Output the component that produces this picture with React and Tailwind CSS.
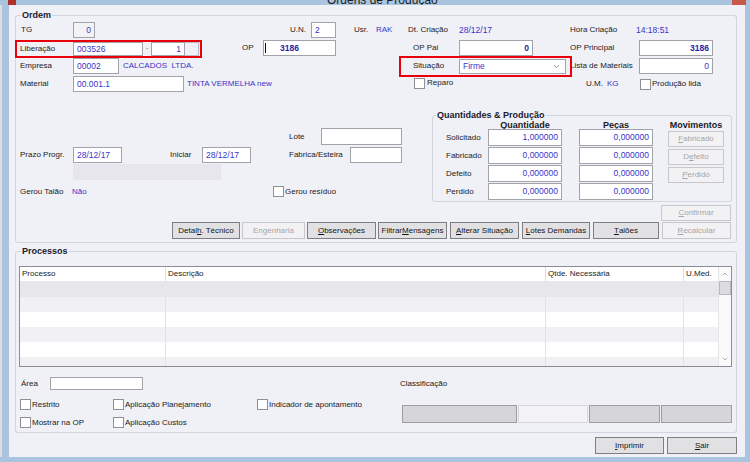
import { ChevronDown, ChevronUp } from 'lucide-react';

function Box({ className = '', gray = false, children }) {
  return (
    <div
      className={`flex shrink-0 items-center overflow-hidden whitespace-nowrap border border-[#a2a2aa] px-[3px] text-[8.5px] text-[#3a35c6] ${gray ? 'bg-[#f3f3f5]' : 'bg-white'} ${className}`}
    >
      {children}
    </div>
  );
}

function Lbl({ className = '', children }) {
  return <span className={`flex shrink-0 items-center whitespace-nowrap ${className}`}>{children}</span>;
}

function Check() {
  return <span className="h-[11px] w-[11px] shrink-0 border border-[#8f8f94] bg-white" />;
}

function Btn({ className = '', disabled = false, children }) {
  return (
    <button
      type="button"
      className={`flex shrink-0 items-center justify-center whitespace-nowrap border text-[8px] ${disabled ? 'border-[#c8c8cc] bg-[#f2f2f4] text-[#a6a6a6]' : 'border-[#7e7e84] bg-[#e1e1e3] text-[#151515]'} ${className}`}
    >
      {children}
    </button>
  );
}

function U({ children }) {
  return <span className="underline underline-offset-1">{children}</span>;
}

function Group({ title, titleClass = 'left-[5px]', className = '', children }) {
  return (
    <div className={`relative shrink-0 rounded-[3px] border border-[#d2d5de] ${className}`}>
      <span className={`absolute -top-[5px] bg-[#f0f0f7] px-[1px] text-[9px] font-bold leading-[9px] text-[#1a1a2e] ${titleClass}`}>
        {title}
      </span>
      {children}
    </div>
  );
}

const cols = ['w-[146px]', 'w-[380px]', 'w-[138px]', 'w-[34px]'];
const heads = ['Processo', 'Descrição', 'Qtde. Necessária', 'U.Med.'];
const qtyRows = [
  ['Solicitado', '1,000000', '0,000000'],
  ['Fabricado', '0,000000', '0,000000'],
  ['Defeito', '0,000000', '0,000000'],
  ['Perdido', '0,000000', '0,000000'],
];

export default function App() {
  return (
    <div className="flex h-[462px] w-[750px] flex-col overflow-hidden bg-[#aac4e0] font-['Liberation_Sans',Arial,sans-serif] text-[8px] text-[#1b1b1b]">
      {/* Title bar */}
      <div className="flex h-[5px] shrink-0 overflow-hidden bg-[#aac4e0]">
        <span className="ml-[8px] h-[5px] w-[8px] shrink-0 bg-[#b0302a]" />
        <span className="-mt-[7px] ml-[311px] shrink-0 whitespace-nowrap text-[12px] leading-[14px] text-[#1c1c1c]">
          Ordens de Produção
        </span>
        <span className="ml-auto mr-[4px] h-[5px] w-[14px] shrink-0 bg-[#c95a4b]" />
      </div>

      <div className="flex h-[452px] shrink-0">
        <div className="w-[2px] shrink-0 bg-[#dadde2]" />
        <div className="w-[7px] shrink-0 bg-[#aac4e0]" />

        {/* Client area */}
        <div className="flex w-[736px] shrink-0 flex-col bg-[#f0f0f7]">
          {/* Ordem */}
          <Group title="Ordem" className="ml-[6px] mt-[10px] flex h-[228px] w-[722px] flex-col">
            <div className="mt-[6px] flex h-[16px] items-center">
              <Lbl className="ml-[5px] w-[52px]">TG</Lbl>
              <Box gray className="h-[16px] w-[22px] justify-end">0</Box>
              <Lbl className="w-[211px] justify-end">U.N.</Lbl>
              <Box className="ml-[5px] h-[16px] w-[25px]">2</Box>
              <Lbl className="ml-[18px] w-[22px]">Usr.</Lbl>
              <Lbl className="w-[32px] text-[#3a35c6]">RAK</Lbl>
              <Lbl className="w-[51px]">Dt. Criação</Lbl>
              <Lbl className="w-[111px] text-[8.5px] text-[#3a35c6]">28/12/17</Lbl>
              <Lbl className="w-[66px]">Hora Criação</Lbl>
              <Lbl className="text-[8.5px] text-[#3a35c6]">14:18:51</Lbl>
            </div>

            <div className="mt-[2px] flex h-[18px] items-start">
              <div className="-ml-[1px] flex h-[18px] w-[187px] shrink-0 items-center border-2 border-[#e8000b]">
                <Lbl className="ml-[3px] w-[53px]">Liberação</Lbl>
                <Box className="h-[14px] w-[70px]">003526</Box>
                <Lbl className="w-[8px] justify-center">·</Lbl>
                <Box className="h-[14px] w-[34px] justify-end">1</Box>
                <span className="h-[14px] w-[14px] shrink-0 border border-l-0 border-[#bcbcc4]" />
              </div>
              <Lbl className="ml-[40px] h-[16px] w-[21px]">OP</Lbl>
              <div className="flex h-[16px] w-[73px] shrink-0 items-center border border-[#a2a2aa] bg-white px-[1px]">
                <span className="h-[10px] w-px bg-black" />
                <span className="ml-[14px] text-[8.5px] font-bold text-[#1e1ea8]">3186</span>
              </div>
              <Lbl className="ml-[77px] h-[16px] w-[46px]">OP Pai</Lbl>
              <Box className="h-[16px] w-[74px] justify-end">
                <span className="font-bold text-[#1e1ea8]">0</span>
              </Box>
              <Lbl className="ml-[37px] h-[16px] w-[69px]">OP Principal</Lbl>
              <Box className="h-[16px] w-[74px] justify-end">
                <span className="font-bold text-[#1e1ea8]">3186</span>
              </Box>
            </div>

            <div className="flex h-[18px] items-start">
              <Lbl className="ml-[4px] h-[16px] w-[53px]">Empresa</Lbl>
              <Box className="h-[16px] w-[46px]">00002</Box>
              <Lbl className="ml-[4px] h-[16px] w-[276px] whitespace-pre text-[#3a35c6]">CALCADOS  LTDA.</Lbl>
              <div className="relative z-10 -mt-[2px] flex h-[21px] w-[173px] shrink-0 items-start border-2 border-[#e8000b]">
                <Lbl className="ml-[12px] h-[16px] w-[46px]">Situação</Lbl>
                <div className="mt-[1px] flex h-[15px] w-[107px] shrink-0 items-center border border-[#a2a2aa] bg-white pl-[3px] pr-[4px] text-[8.5px] text-[#3a35c6]">
                  <span>Firme</span>
                  <ChevronDown className="ml-auto text-[#444]" size={9} strokeWidth={1.6} />
                </div>
              </div>
              <Lbl className="-ml-[2px] h-[16px] w-[69px]">Lista de Materiais</Lbl>
              <Box className="h-[16px] w-[74px] justify-end">0</Box>
            </div>

            <div className="flex h-[16px] items-start">
              <Lbl className="ml-[4px] h-[16px] w-[53px]">Material</Lbl>
              <Box className="h-[16px] w-[111px]">00.001.1</Box>
              <Lbl className="ml-[3px] h-[16px] w-[227px] text-[#3a35c6]">TINTA VERMELHA new</Lbl>
              <div className="mt-[1px] flex w-[172px] shrink-0 items-center">
                <Check />
                <span className="ml-[2px]">Reparo</span>
              </div>
              <Lbl className="h-[16px] w-[21px]">U.M.</Lbl>
              <Lbl className="h-[16px] w-[33px] text-[#3a35c6]">KG</Lbl>
              <div className="mt-[2px] flex shrink-0 items-center">
                <Check />
                <span className="ml-[1px]">Produção lida</span>
              </div>
            </div>

            <div className="flex h-[129px] items-start">
              {/* left column */}
              <div className="flex w-[416px] shrink-0 flex-col">
                <div className="mt-[36px] flex h-[17px] items-center">
                  <Lbl className="ml-[273px] w-[32px]">Lote</Lbl>
                  <Box className="h-[17px] w-[81px]" />
                </div>
                <div className="mt-[2px] flex h-[16px] items-center">
                  <Lbl className="ml-[4px] w-[53px]">Prazo Progr.</Lbl>
                  <Box className="h-[16px] w-[49px]">28/12/17</Box>
                  <Lbl className="ml-[48px] w-[32px]">Iniciar</Lbl>
                  <Box className="h-[16px] w-[49px]">28/12/17</Box>
                  <Lbl className="ml-[38px] w-[61px]">Fabrica/Esteira</Lbl>
                  <Box className="h-[16px] w-[52px]" />
                </div>
                <div className="ml-[57px] mt-[1px] h-[16px] w-[148px] bg-[#e6e6ec]" />
                <div className="mt-[6px] flex h-[11px] items-center">
                  <Lbl className="ml-[4px] w-[52px]">Gerou Talão</Lbl>
                  <Lbl className="w-[201px] text-[#3a35c6]">Não</Lbl>
                  <Check />
                  <span className="ml-[1px]">Gerou resíduo</span>
                </div>
              </div>

              {/* right column */}
              <div className="flex w-[300px] shrink-0 flex-col">
                <Group title="Quantidades & Produção" titleClass="left-[3px]" className="mt-[23px] flex h-[87px] w-[300px]">
                  <div className="flex shrink-0 flex-col">
                    <div className="mt-[5px] flex h-[8px] items-center text-[9px] font-bold leading-[8px]">
                      <span className="w-[55px] shrink-0" />
                      <span className="w-[74px] shrink-0 text-center">Quantidade</span>
                      <span className="ml-[17px] w-[74px] shrink-0 text-center">Peças</span>
                    </div>
                    <div className="flex flex-col gap-[1px]">
                      {qtyRows.map(([label, q, p]) => (
                        <div key={label} className="flex h-[17px] items-center">
                          <Lbl className="ml-[13px] w-[42px]">{label}</Lbl>
                          <Box className="h-[17px] w-[74px] justify-end">{q}</Box>
                          <Box className="ml-[17px] h-[17px] w-[74px] justify-end">{p}</Box>
                        </div>
                      ))}
                    </div>
                  </div>
                  <div className="ml-[15px] flex shrink-0 flex-col">
                    <span className="mt-[5px] flex h-[8px] w-[56px] items-center justify-center text-[9px] font-bold leading-[8px]">Movimentos</span>
                    <div className="mt-[2px] flex flex-col gap-[2px]">
                      <Btn disabled className="h-[16px] w-[56px]"><U>F</U>abricado</Btn>
                      <Btn disabled className="h-[16px] w-[56px]">D<U>e</U>feito</Btn>
                      <Btn disabled className="h-[16px] w-[56px]"><U>P</U>erdido</Btn>
                    </div>
                  </div>
                </Group>
                <Btn disabled className="ml-[229px] mt-[3px] h-[16px] w-[70px]"><U>C</U>onfirmar</Btn>
              </div>
            </div>

            <div className="mt-[1px] flex h-[17px] items-center">
              <Btn className="ml-[156px] h-[17px] w-[68px]">Detal<U>h</U>. Técnico</Btn>
              <Btn disabled className="ml-[2px] h-[17px] w-[63px]">Engenharia</Btn>
              <Btn className="ml-[2px] h-[17px] w-[69px]"><U>O</U>bservações</Btn>
              <Btn className="ml-[2px] h-[17px] w-[69px]">Filtrar <U>M</U>ensagens</Btn>
              <Btn className="ml-[3px] h-[17px] w-[69px]"><U>A</U>lterar Situação</Btn>
              <Btn className="ml-[3px] h-[17px] w-[68px]"><U>L</U>otes Demandas</Btn>
              <Btn className="ml-[3px] h-[17px] w-[66px] bg-[#d8d8da]"><U>T</U>alões</Btn>
              <Btn disabled className="ml-[3px] h-[17px] w-[69px]"><U>R</U>ecalcular</Btn>
            </div>
          </Group>

          {/* Processos */}
          <Group title="Processos" className="ml-[6px] mt-[8px] flex h-[182px] w-[722px] flex-col">
            <div className="ml-[3px] mt-[14px] flex h-[101px] w-[713px] shrink-0 overflow-hidden border border-[#8c8c94] bg-white">
              <div className="flex w-[698px] shrink-0 flex-col">
                <div className="flex h-[14px] shrink-0 bg-white">
                  {cols.map((c, j) => (
                    <div key={c} className={`${c} flex h-full shrink-0 items-center pl-[2px] ${j < 3 ? 'border-r border-[#dcdce2]' : ''}`}>
                      {heads[j]}
                    </div>
                  ))}
                </div>
                <div className="h-[16px] shrink-0 bg-[#e7e7ea]" />
                {[0, 1, 2, 3, 4].map((i) => (
                  <div key={i} className={`flex h-[15px] shrink-0 ${i % 2 === 0 ? 'bg-[#f1f1f3]' : 'bg-white'}`}>
                    {cols.map((c, j) => (
                      <div key={c} className={`${c} h-full shrink-0 ${j < 3 ? 'border-r border-[#e2e2e6]' : ''}`} />
                    ))}
                  </div>
                ))}
              </div>
              <div className="flex w-[13px] shrink-0 flex-col border-l border-[#e4e4e8] bg-[#fafafa]">
                <div className="flex h-[14px] shrink-0 items-center justify-center">
                  <ChevronUp size={8} strokeWidth={1.5} className="text-[#606060]" />
                </div>
                <div className="h-[14px] shrink-0 border border-[#b8b8be] bg-[#dcdce0]" />
                <div className="flex-1" />
                <div className="flex h-[14px] shrink-0 items-center justify-center">
                  <ChevronDown size={8} strokeWidth={1.5} className="text-[#606060]" />
                </div>
              </div>
            </div>

            <div className="mt-[10px] flex h-[13px] items-center">
              <Lbl className="ml-[5px] w-[29px]">Área</Lbl>
              <Box className="h-[13px] w-[93px]" />
              <Lbl className="ml-[257px]">Classificação</Lbl>
            </div>

            <div className="flex items-start">
              <div className="flex w-[386px] shrink-0 flex-col">
                <div className="mt-[9px] flex h-[11px] items-center">
                  <div className="ml-[4px] flex w-[93px] shrink-0 items-center">
                    <Check />
                    <span className="ml-[1px]">Restrito</span>
                  </div>
                  <div className="flex w-[144px] shrink-0 items-center">
                    <Check />
                    <span className="ml-[1px]">Aplicação Planejamento</span>
                  </div>
                  <div className="flex shrink-0 items-center">
                    <Check />
                    <span className="ml-[1px]">Indicador de apontamento</span>
                  </div>
                </div>
                <div className="mt-[7px] flex h-[11px] items-center">
                  <div className="ml-[4px] flex w-[93px] shrink-0 items-center">
                    <Check />
                    <span className="ml-[1px]">Mostrar na OP</span>
                  </div>
                  <div className="flex shrink-0 items-center">
                    <Check />
                    <span className="ml-[1px]">Aplicação Custos</span>
                  </div>
                </div>
              </div>
              <div className="mt-[15px] flex h-[18px] shrink-0">
                <div className="h-[18px] w-[115px] border border-[#9d9da3] bg-[#d6d6d8]" />
                <div className="ml-[1px] h-[18px] w-[70px] border border-[#d8d8dc] bg-[#f3f3f5]" />
                <div className="ml-[1px] h-[18px] w-[71px] border border-[#9d9da3] bg-[#d6d6d8]" />
                <div className="ml-[1px] h-[18px] w-[71px] border border-[#9d9da3] bg-[#d6d6d8]" />
              </div>
            </div>
          </Group>

          <div className="mt-[4px] flex h-[17px] items-center">
            <Btn className="ml-[586px] h-[17px] w-[69px]"><U>I</U>mprimir</Btn>
            <Btn className="ml-[3px] h-[17px] w-[70px]"><U>S</U>air</Btn>
          </div>
        </div>

        <div className="w-[5px] shrink-0 bg-[#aac4e0]" />
      </div>
      <div className="h-[5px] shrink-0 bg-[#aac4e0]" />
    </div>
  );
}
